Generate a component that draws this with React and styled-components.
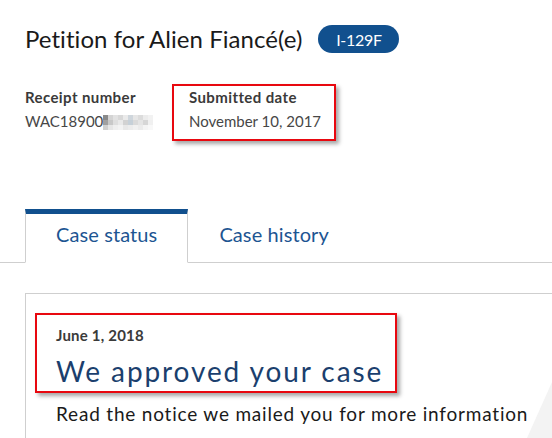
import React from "react";
import styled, { createGlobalStyle } from "styled-components";

const Global = createGlobalStyle`
  html, body { margin: 0; padding: 0; background: #fff; }
  body { font-family: Lato, "Liberation Sans", sans-serif; }
  * { box-sizing: border-box; }
`;

const Page = styled.div`
  position: relative;
  width: 552px;
  height: 438px;
  overflow: hidden;
  background: #fff;
`;

const Header = styled.header`
  padding: 25px 0 0 25px;
`;

const TitleRow = styled.div`
  display: flex;
  align-items: center;
  gap: 16px;
  height: 28px;
`;

const Title = styled.h1`
  margin: 0;
  font-size: 24px;
  line-height: 28px;
  font-weight: 400;
  letter-spacing: 0.05px;
  color: #1a1a1a;
`;

const Badge = styled.span`
  display: inline-flex;
  align-items: center;
  justify-content: center;
  width: 81px;
  height: 28px;
  border-radius: 14px;
  background: #11508e;
  color: #fff;
  font-size: 16px;
  letter-spacing: -0.3px;
`;

const MetaRow = styled.div`
  display: flex;
  align-items: flex-start;
  margin-top: 31px;
`;

const MetaItem = styled.div`
  width: ${(p) => (p.$highlight ? "auto" : "149px")};
  border: 2px solid ${(p) => (p.$highlight ? "#e8080f" : "transparent")};
  margin-left: ${(p) => (p.$highlight ? "0" : "-2px")};
  padding: 2px ${(p) => (p.$highlight ? "13px" : "0")} 8px ${(p) => (p.$highlight ? "15px" : "0")};
  box-shadow: ${(p) => (p.$highlight ? "3px 3px 4px rgba(0,0,0,0.35)" : "none")};
`;

const Label = styled.div`
  font-size: 15px;
  line-height: 18px;
  font-weight: 700;
  letter-spacing: 0.4px;
  color: #3a3a3a;
`;

const Value = styled.div`
  display: flex;
  align-items: center;
  margin-top: 5px;
  font-size: 15px;
  line-height: 20px;
  color: #474747;
`;

const Mosaic = styled.span`
  display: inline-grid;
  grid-template-columns: repeat(10, 5px);
  grid-auto-rows: 5px;
  margin-top: 2px;
`;

const Cell = styled.span`
  background: ${(p) => p.$c};
`;

const TabStrip = styled.nav`
  display: flex;
  margin-top: 68px;
  padding-left: 25px;
  border-bottom: 1px solid #cfcfcf;
`;

const Tab = styled.div`
  margin-bottom: ${(p) => (p.$active ? "-1px" : "0")};
  padding: 8px 30px 16px;
  font-size: 20px;
  line-height: 24px;
  letter-spacing: 0.1px;
  color: #1d5592;
  border-top: 5px solid ${(p) => (p.$active ? "#11508e" : "transparent")};
  border-left: 1px solid ${(p) => (p.$active ? "#cfcfcf" : "transparent")};
  border-right: 1px solid ${(p) => (p.$active ? "#cfcfcf" : "transparent")};
  border-bottom: ${(p) => (p.$active ? "1px solid #fff" : "0")};
  background: ${(p) => (p.$active ? "#fff" : "transparent")};
`;

const Card = styled.section`
  margin: 30px 0 0 25px;
  width: 600px;
  height: 300px;
  border: 1px solid #cfcfcf;
  padding: 19px 0 0 9px;
`;

const StatusBox = styled.div`
  display: inline-block;
  border: 2px solid #e8080f;
  padding: 11px 12px 3px 19px;
  box-shadow: 3px 3px 4px rgba(0,0,0,0.35);
`;

const StatusDate = styled.div`
  font-size: 15px;
  line-height: 18px;
  font-weight: 700;
  letter-spacing: 0.2px;
  color: #3a3a3a;
`;

const StatusTitle = styled.h2`
  margin: 10px 0 0;
  font-size: 28px;
  line-height: 34px;
  font-weight: 400;
  letter-spacing: 1.9px;
  color: #1b3f6e;
`;

const Description = styled.p`
  margin: 9px 0 0 21px;
  font-size: 19px;
  line-height: 24px;
  letter-spacing: 0.8px;
  color: #1a1a1a;
`;

const Wedge = styled.svg`
  position: absolute;
  right: 0;
  bottom: 0;
`;

const mosaic = [
  "#8a8a8a", "#d4d4d4", "#e2e2e2", "#d8d8d8", "#eaeaea", "#cfd6dc", "#e6e6e6", "#dcdcdc", "#ececec", "#f2f2f2",
  "#a0a0a0", "#c8c8c8", "#dedede", "#e9e9e9", "#d2d2d2", "#c6d0d8", "#dadada", "#e4e4e4", "#d6d6d6", "#f0f0f0",
  "#d0d0d0", "#e6e6e6", "#efefef", "#f3f3f3", "#e8e8e8", "#ececec", "#f1f1f1", "#ebebeb", "#f4f4f4", "#f8f8f8",
];

export default function App() {
  return (
    <Page>
      <Global />
      <Header>
        <TitleRow>
          <Title>Petition for Alien Fiancé(e)</Title>
          <Badge>I-129F</Badge>
        </TitleRow>
        <MetaRow>
          <MetaItem>
            <Label>Receipt number</Label>
            <Value>
              WAC18900
              <Mosaic aria-hidden="true">
                {mosaic.map((c, i) => (
                  <Cell key={i} $c={c} />
                ))}
              </Mosaic>
            </Value>
          </MetaItem>
          <MetaItem $highlight>
            <Label>Submitted date</Label>
            <Value>November 10, 2017</Value>
          </MetaItem>
        </MetaRow>
      </Header>
      <TabStrip>
        <Tab $active>Case status</Tab>
        <Tab>Case history</Tab>
      </TabStrip>
      <Card>
        <StatusBox>
          <StatusDate>June 1, 2018</StatusDate>
          <StatusTitle>We approved your case</StatusTitle>
        </StatusBox>
        <Description>Read the notice we mailed you for more information</Description>
      </Card>
      <Wedge width="30" height="60" viewBox="0 0 30 60">
        <polygon points="30,4 30,60 5,60" fill="#f3f3f3" />
      </Wedge>
    </Page>
  );
}
